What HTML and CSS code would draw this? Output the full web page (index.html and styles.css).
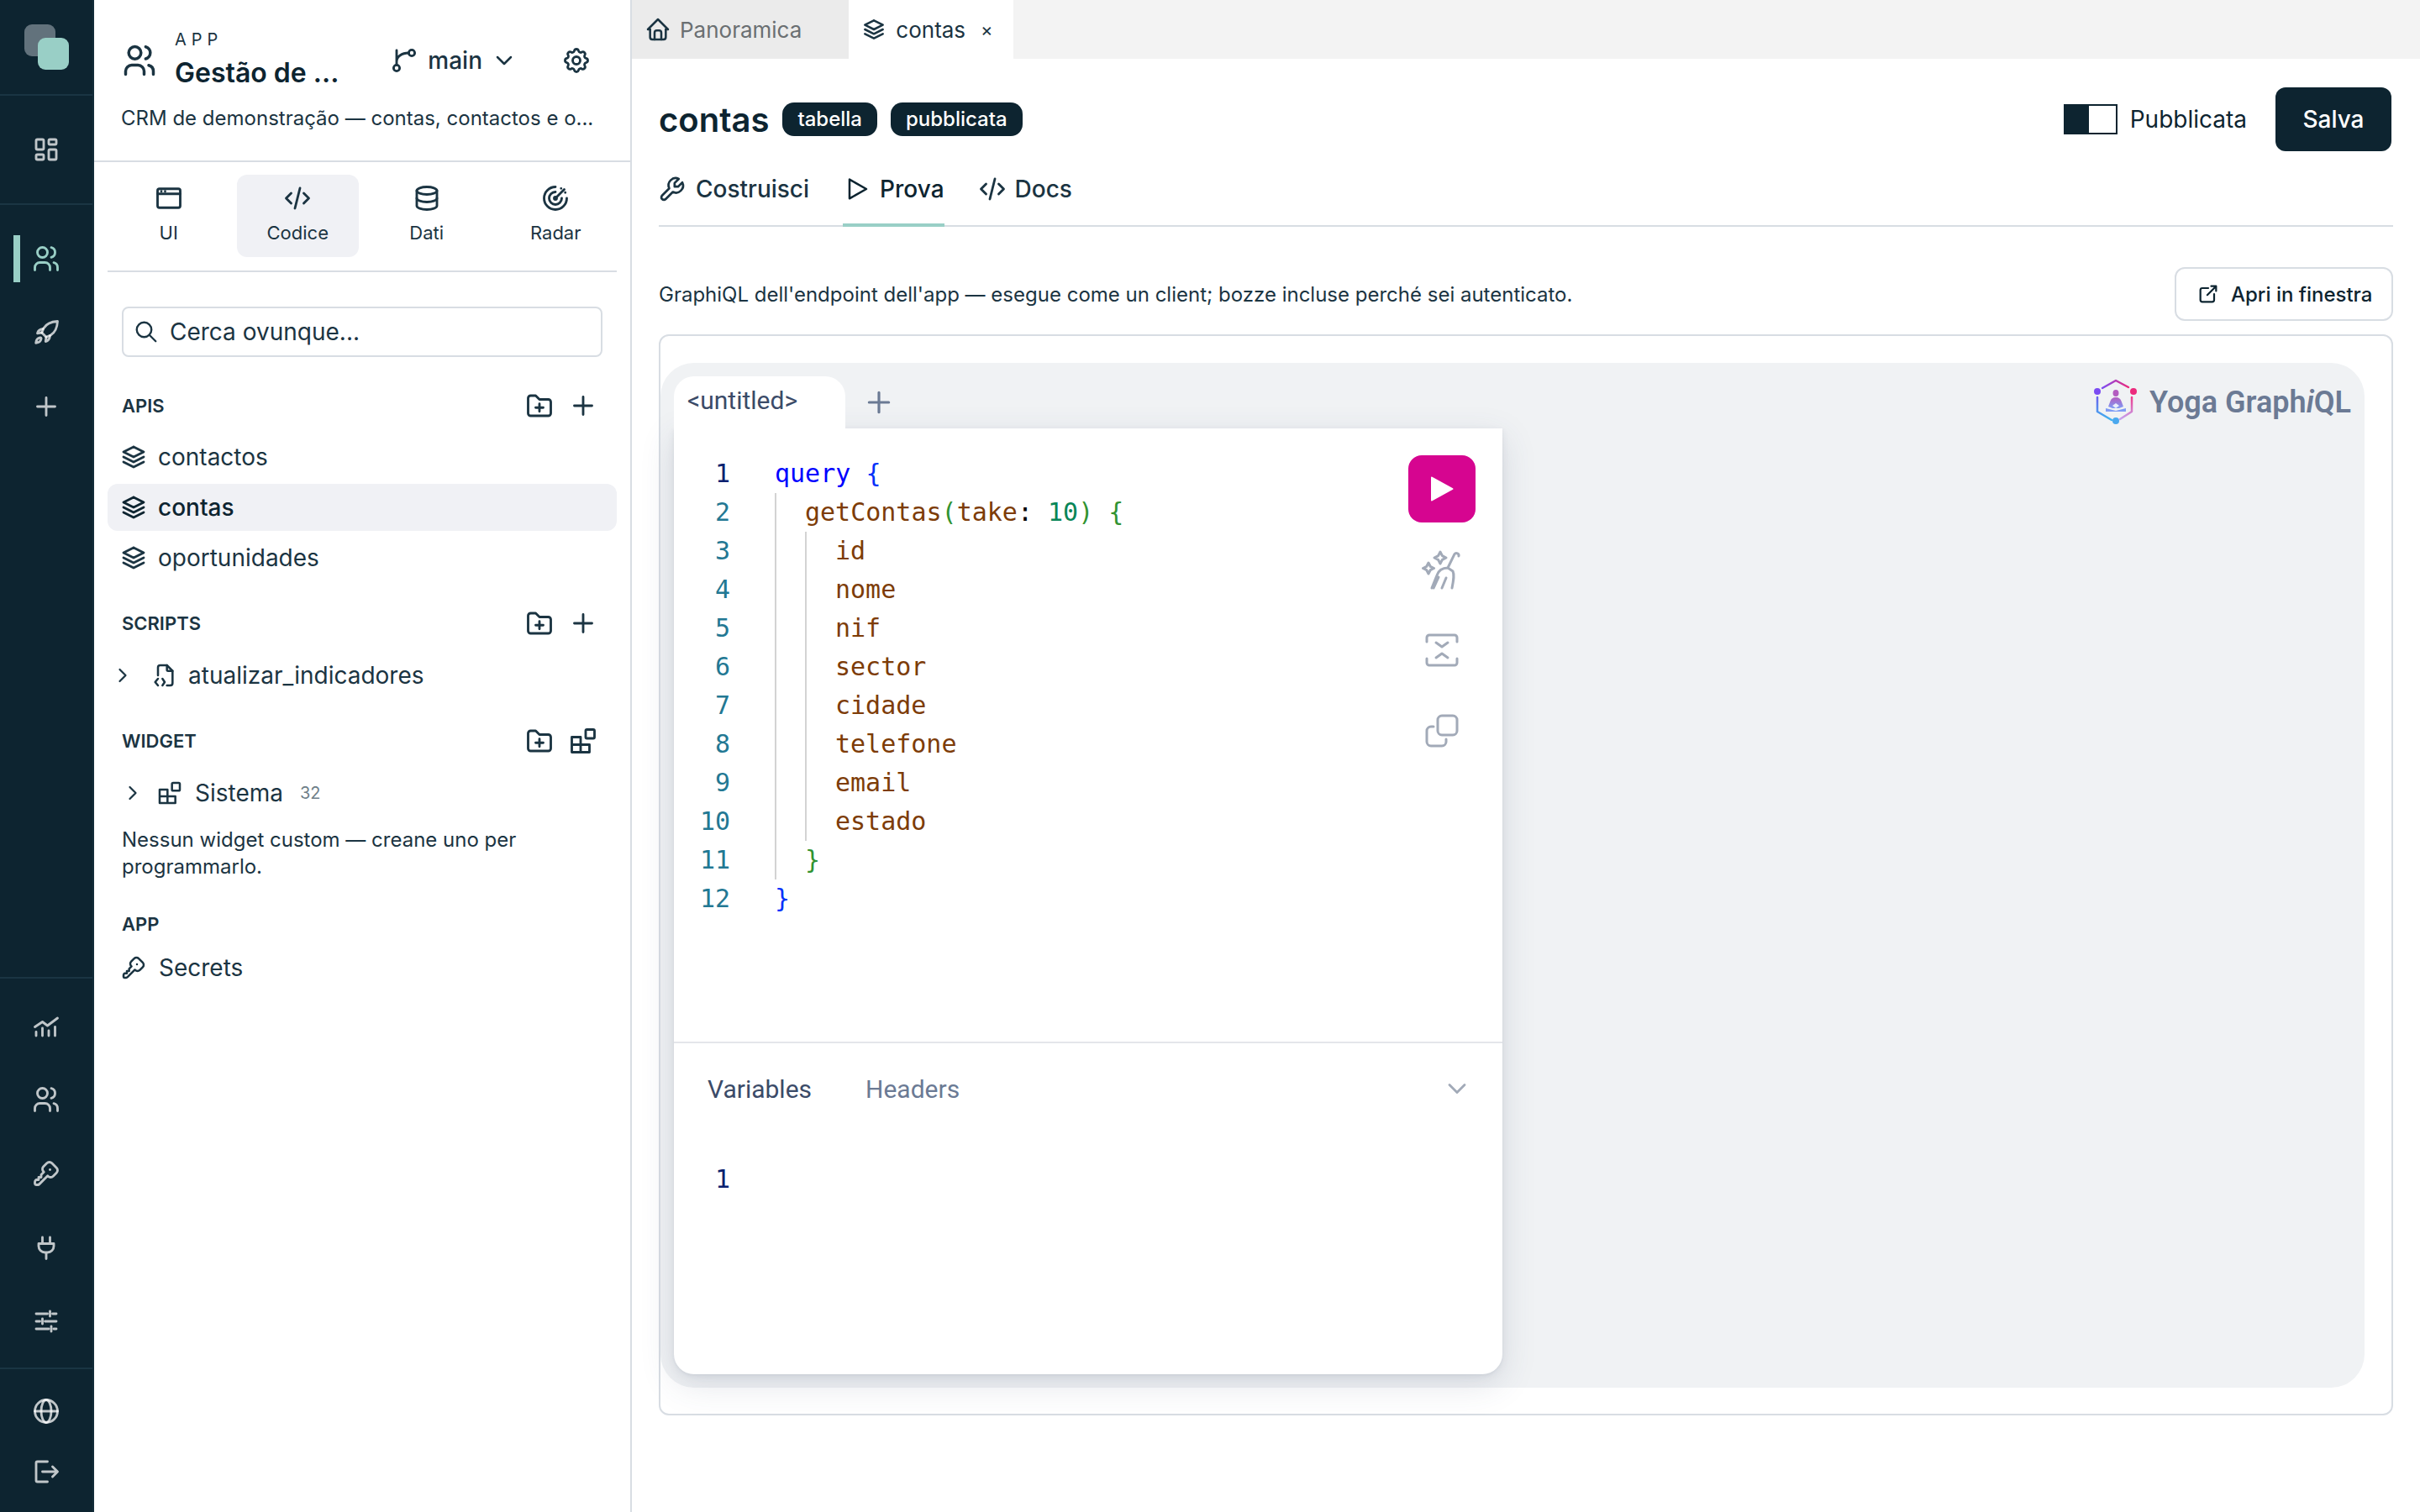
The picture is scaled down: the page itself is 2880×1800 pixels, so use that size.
FILE: index.html
```html
<!DOCTYPE html>
<html lang="it">
<head>
    <meta charset="UTF-8">
    <title>contas - Gestão de demonstração</title>
    <link rel="stylesheet" href="styles.css">
</head>
<body>
    <!-- Icon sprite -->
    <svg class="sprite" xmlns="http://www.w3.org/2000/svg">
        <symbol id="i-users" viewBox="0 0 24 24"><circle cx="9" cy="7" r="4"/><path d="M3 21v-2a4 4 0 0 1 4-4h4a4 4 0 0 1 4 4v2"/><path d="M16 3.13a4 4 0 0 1 0 7.75"/><path d="M21 21v-2a4 4 0 0 0-3-3.85"/></symbol>
        <symbol id="i-dashboard" viewBox="0 0 24 24"><rect x="4" y="4" width="6" height="8" rx="1"/><rect x="4" y="16" width="6" height="4" rx="1"/><rect x="14" y="12" width="6" height="8" rx="1"/><rect x="14" y="4" width="6" height="4" rx="1"/></symbol>
        <symbol id="i-rocket" viewBox="0 0 24 24"><path d="M21 3c-5 .3-9 2-11 5.500L8.500 12l3.500 3.500l3.500-1.500C19 12 20.700 8 21 3z"/><path d="M9.500 9C7 9.300 5.500 10.500 5 12.500l3.500-.5"/><path d="M15 14.500c-.3 2.500-1.500 4-3.500 4.500l.5-3.500"/><path d="M7 16c-1.500 .3-3 1.800-3.200 4.200C6.200 20 7.700 18.500 8 17c.2-.8-.2-1.200-1-1z"/></symbol>
        <symbol id="i-plus" viewBox="0 0 24 24"><path d="M12 5v14M5 12h14"/></symbol>
        <symbol id="i-chart" viewBox="0 0 24 24"><path d="M3 13l6-4l4 3l8-6"/><path d="M4 20v-3M9 20v-6M14 20v-4M19 20v-7"/></symbol>
        <symbol id="i-key" viewBox="0 0 24 24"><path d="M16.555 3.843l3.602 3.602a2.877 2.877 0 0 1 0 4.069l-2.643 2.643a2.877 2.877 0 0 1-4.069 0l-.301-.301l-6.558 6.558a2 2 0 0 1-1.239 .578l-.175 .008h-1.172a1 1 0 0 1-.993-.883l-.007-.117v-1.172a2 2 0 0 1 .467-1.284l.119-.13l.414-.414h2v-2h2v-2l2.144-2.144l-.301-.301a2.877 2.877 0 0 1 0-4.069l2.643-2.643a2.877 2.877 0 0 1 4.069 0"/><path d="M15 9h.01"/></symbol>
        <symbol id="i-plug" viewBox="0 0 24 24"><path d="M9 4v5M15 4v5M6 9h12v2a5 5 0 0 1-5 5h-2a5 5 0 0 1-5-5zM12 16v5"/></symbol>
        <symbol id="i-sliders" viewBox="0 0 24 24"><path d="M4 6h9M17 6h3M15 4v4M4 12h3M11 12h9M9 10v4M4 18h10M18 18h2M16 16v4"/></symbol>
        <symbol id="i-world" viewBox="0 0 24 24"><circle cx="12" cy="12" r="9"/><ellipse cx="12" cy="12" rx="4" ry="9"/><path d="M3 12h18"/></symbol>
        <symbol id="i-logout" viewBox="0 0 24 24"><path d="M13 4H5a1 1 0 0 0-1 1v14a1 1 0 0 0 1 1h8"/><path d="M9 12h12l-4-4M21 12l-4 4"/></symbol>
        <symbol id="i-branch" viewBox="0 0 24 24"><circle cx="6" cy="18" r="2.400"/><circle cx="18" cy="6" r="2.400"/><path d="M6 15.600V4M6 13c0-4 4-7 9.600-7"/></symbol>
        <symbol id="i-chevron-down" viewBox="0 0 24 24"><path d="M6 9l6 6l6-6"/></symbol>
        <symbol id="i-chevron-right" viewBox="0 0 24 24"><path d="M9 6l6 6l-6 6"/></symbol>
        <symbol id="i-gear" viewBox="0 0 24 24"><path d="M10.325 4.317c.426-1.756 2.924-1.756 3.35 0a1.724 1.724 0 0 0 2.573 1.066c1.543-.94 3.31 .826 2.37 2.37a1.724 1.724 0 0 0 1.065 2.572c1.756 .426 1.756 2.924 0 3.35a1.724 1.724 0 0 0-1.066 2.573c.94 1.543-.826 3.31-2.37 2.37a1.724 1.724 0 0 0-2.572 1.065c-.426 1.756-2.924 1.756-3.35 0a1.724 1.724 0 0 0-2.573-1.066c-1.543 .94-3.31-.826-2.37-2.37a1.724 1.724 0 0 0-1.065-2.572c-1.756-.426-1.756-2.924 0-3.35a1.724 1.724 0 0 0 1.066-2.573c-.94-1.543 .826-3.31 2.37-2.37c1 .608 2.296 .07 2.572-1.065z"/><circle cx="12" cy="12" r="3"/></symbol>
        <symbol id="i-browser" viewBox="0 0 24 24"><rect x="3" y="4.500" width="18" height="15" rx="1.500"/><path d="M3 8.500h18M6 6.500h.01M9 6.500h.01"/></symbol>
        <symbol id="i-code" viewBox="0 0 24 24"><path d="M7 8l-4 4l4 4M17 8l4 4l-4 4M14 4l-4 16"/></symbol>
        <symbol id="i-database" viewBox="0 0 24 24"><ellipse cx="12" cy="6" rx="8" ry="3"/><path d="M4 6v12a8 3 0 0 0 16 0V6"/><path d="M4 12a8 3 0 0 0 16 0"/></symbol>
        <symbol id="i-radar" viewBox="0 0 24 24"><circle cx="12" cy="12" r="1"/><path d="M12 3a9 9 0 1 0 9 9"/><path d="M12 7a5 5 0 1 0 5 5"/><path d="M12 12l7-7"/><path d="M16.500 4.200h.01M19.800 7.500h.01"/></symbol>
        <symbol id="i-search" viewBox="0 0 24 24"><circle cx="10" cy="10" r="7"/><path d="M21 21l-6-6"/></symbol>
        <symbol id="i-folder-plus" viewBox="0 0 24 24"><path d="M5 4h4l3 3h7a2 2 0 0 1 2 2v9a2 2 0 0 1-2 2H5a2 2 0 0 1-2-2V6a2 2 0 0 1 2-2z"/><path d="M12 10.500v6M9 13.500h6"/></symbol>
        <symbol id="i-stack" viewBox="0 0 24 24"><path d="M12 4l-8 4l8 4l8-4l-8-4"/><path d="M4 12l8 4l8-4"/><path d="M4 16l8 4l8-4"/></symbol>
        <symbol id="i-file-code" viewBox="0 0 24 24"><path d="M14 3v4a1 1 0 0 0 1 1h4"/><path d="M6 12V5a2 2 0 0 1 2-2h6l5 5v11a2 2 0 0 1-2 2h-3"/><path d="M6 15l-2.500 3l2.500 3M10 15l2 3l-2 3"/></symbol>
        <symbol id="i-apps" viewBox="0 0 24 24"><path d="M3 9h7v6h7v6H3zM3 15h7M10 15v6"/><rect x="14" y="3" width="7" height="7" rx="1"/></symbol>
        <symbol id="i-home" viewBox="0 0 24 24"><path d="M5 12H3l9-9l9 9h-2"/><path d="M5 12v7a2 2 0 0 0 2 2h10a2 2 0 0 0 2-2v-7"/><path d="M9 21v-6a2 2 0 0 1 2-2h2a2 2 0 0 1 2 2v6"/></symbol>
        <symbol id="i-tool" viewBox="0 0 24 24"><path transform="matrix(-1 0 0 1 24 0)" d="M7 10h3V7L6.500 3.500a6 6 0 0 1 8 8l6 6a2 2 0 0 1-3 3l-6-6a6 6 0 0 1-8-8L7 10"/></symbol>
        <symbol id="i-play" viewBox="0 0 24 24"><path d="M6 3.500v17l15-8.500z"/></symbol>
        <symbol id="i-external" viewBox="0 0 24 24"><path d="M12 6H6a2 2 0 0 0-2 2v10a2 2 0 0 0 2 2h10a2 2 0 0 0 2-2v-6"/><path d="M11 13l9-9M15 4h5v5"/></symbol>
        <symbol id="i-broom" viewBox="0 0 48 48"><path d="M22 3l2.400 4.600L29 10l-4.600 2.400L22 17l-2.400-4.600L15 10l4.600-2.400z"/><path d="M8 16l2.200 4.300l4.300 2.200l-4.300 2.200L8 29l-2.200-4.300l-4.300-2.200l4.300-2.200z"/><path d="M44 8a2.800 2.800 0 0 0-5-2.300L31 22c-6 0-11 3-13 9l-6 15M31 22l6 4c2 4 1 10-1 20M29 34l-5 12M20 33l-6 13"/></symbol>
        <symbol id="i-merge" viewBox="0 0 40 40"><path d="M2 10V5a3 3 0 0 1 3-3h30a3 3 0 0 1 3 3v5M2 30v5a3 3 0 0 0 3 3h30a3 3 0 0 0 3-3v-5"/><path d="M13 11l7 5l7-5M13 29l7-5l7 5"/></symbol>
        <symbol id="i-copy" viewBox="0 0 40 40"><rect x="15" y="2" width="23" height="23" rx="5"/><path d="M10 15H7a5 5 0 0 0-5 5v13a5 5 0 0 0 5 5h13a5 5 0 0 0 5-5v-3"/></symbol>
    </svg>

    <div class="app">
        <!-- Rail -->
        <nav class="rail">
            <div class="rail-logo">
                <div class="logo">
                    <span class="logo-back"></span>
                    <span class="logo-front"></span>
                </div>
            </div>
            <div class="rail-home">
                <svg class="icon rail-icon"><use href="#i-dashboard"/></svg>
            </div>
            <div class="rail-group">
                <a class="rail-item active"><svg class="icon rail-icon"><use href="#i-users"/></svg></a>
                <a class="rail-item"><svg class="icon rail-icon"><use href="#i-rocket"/></svg></a>
                <a class="rail-item"><svg class="icon rail-icon"><use href="#i-plus"/></svg></a>
            </div>
            <div class="rail-group rail-tools">
                <a class="rail-item"><svg class="icon rail-icon"><use href="#i-chart"/></svg></a>
                <a class="rail-item"><svg class="icon rail-icon"><use href="#i-users"/></svg></a>
                <a class="rail-item"><svg class="icon rail-icon"><use href="#i-key"/></svg></a>
                <a class="rail-item"><svg class="icon rail-icon"><use href="#i-plug"/></svg></a>
                <a class="rail-item"><svg class="icon rail-icon"><use href="#i-sliders"/></svg></a>
            </div>
            <div class="rail-group rail-foot">
                <a class="rail-item short"><svg class="icon rail-icon"><use href="#i-world"/></svg></a>
                <a class="rail-item short"><svg class="icon rail-icon"><use href="#i-logout"/></svg></a>
            </div>
        </nav>

        <!-- Explorer panel -->
        <aside class="panel">
            <header class="app-head">
                <div class="app-top">
                    <svg class="icon app-icon"><use href="#i-users"/></svg>
                    <div class="app-title">
                        <div class="app-kicker">APP</div>
                        <div class="app-name">Gestão de ...</div>
                    </div>
                    <div class="branch">
                        <svg class="icon icon-36"><use href="#i-branch"/></svg>
                        <span>main</span>
                        <svg class="icon branch-caret"><use href="#i-chevron-down"/></svg>
                    </div>
                    <svg class="icon icon-36 app-gear"><use href="#i-gear"/></svg>
                </div>
                <p class="app-desc">CRM de demonstração — contas, contactos e o...</p>
            </header>

            <div class="modes">
                <div class="mode"><svg class="icon icon-36"><use href="#i-browser"/></svg><span>UI</span></div>
                <div class="mode active"><svg class="icon icon-36"><use href="#i-code"/></svg><span>Codice</span></div>
                <div class="mode"><svg class="icon icon-36"><use href="#i-database"/></svg><span>Dati</span></div>
                <div class="mode"><svg class="icon icon-36"><use href="#i-radar"/></svg><span>Radar</span></div>
            </div>

            <div class="search">
                <svg class="icon search-icon"><use href="#i-search"/></svg>
                <span>Cerca ovunque...</span>
            </div>

            <section class="section section-apis">
                <div class="section-head">
                    <span class="section-title">APIS</span>
                    <div class="section-actions">
                        <svg class="icon icon-36"><use href="#i-folder-plus"/></svg>
                        <svg class="icon icon-36"><use href="#i-plus"/></svg>
                    </div>
                </div>
                <div class="rows">
                    <div class="row"><svg class="icon icon-36"><use href="#i-stack"/></svg>contactos</div>
                    <div class="row active"><svg class="icon icon-36"><use href="#i-stack"/></svg>contas</div>
                    <div class="row"><svg class="icon icon-36"><use href="#i-stack"/></svg>oportunidades</div>
                </div>
            </section>

            <section class="section">
                <div class="section-head">
                    <span class="section-title">SCRIPTS</span>
                    <div class="section-actions">
                        <svg class="icon icon-36"><use href="#i-folder-plus"/></svg>
                        <svg class="icon icon-36"><use href="#i-plus"/></svg>
                    </div>
                </div>
                <div class="rows">
                    <div class="row tree-script">
                        <svg class="icon tree-caret"><use href="#i-chevron-right"/></svg>
                        <svg class="icon icon-32"><use href="#i-file-code"/></svg>
                        atualizar_indicadores
                    </div>
                </div>
            </section>

            <section class="section">
                <div class="section-head">
                    <span class="section-title">WIDGET</span>
                    <div class="section-actions">
                        <svg class="icon icon-36"><use href="#i-folder-plus"/></svg>
                        <svg class="icon icon-36"><use href="#i-apps"/></svg>
                    </div>
                </div>
                <div class="rows">
                    <div class="row tree-widget">
                        <svg class="icon tree-caret"><use href="#i-chevron-right"/></svg>
                        <svg class="icon icon-32"><use href="#i-apps"/></svg>
                        Sistema
                        <span class="row-count">32</span>
                    </div>
                </div>
                <p class="section-note">Nessun widget custom — creane uno per programmarlo.</p>
            </section>

            <section class="section section-app">
                <div class="section-head">
                    <span class="section-title">APP</span>
                </div>
                <div class="rows">
                    <div class="row"><svg class="icon icon-32 key-icon"><use href="#i-key"/></svg>Secrets</div>
                </div>
            </section>
        </aside>

        <!-- Main area -->
        <main class="main">
            <div class="tabbar">
                <div class="tab"><svg class="icon icon-32"><use href="#i-home"/></svg>Panoramica</div>
                <div class="tab active">
                    <svg class="icon icon-32"><use href="#i-stack"/></svg>contas
                    <span class="tab-close">×</span>
                </div>
            </div>

            <div class="content">
                <div class="page-head">
                    <h1 class="page-title">contas</h1>
                    <span class="badge">tabella</span>
                    <span class="badge">pubblicata</span>
                    <div class="page-actions">
                        <div class="toggle"><span class="toggle-fill"></span></div>
                        <span class="toggle-label">Pubblicata</span>
                        <button class="btn-save">Salva</button>
                    </div>
                </div>

                <div class="subtabs">
                    <div class="subtab"><svg class="icon subtab-tool"><use href="#i-tool"/></svg>Costruisci</div>
                    <div class="subtab active"><svg class="icon icon-32"><use href="#i-play"/></svg>Prova</div>
                    <div class="subtab"><svg class="icon subtab-code"><use href="#i-code"/></svg>Docs</div>
                </div>

                <div class="intro">
                    <p>GraphiQL dell'endpoint dell'app — esegue come un client; bozze incluse perché sei autenticato.</p>
                    <button class="btn-open"><svg class="icon external-icon"><use href="#i-external"/></svg>Apri in finestra</button>
                </div>

                <!-- GraphiQL frame -->
                <div class="frame">
                    <div class="gql">
                        <div class="gql-top">
                            <div class="gql-tab">&lt;untitled&gt;</div>
                            <svg class="icon gql-add"><use href="#i-plus"/></svg>
                            <div class="yoga">
                                <svg class="yoga-logo" viewBox="0 0 52 56">
                                    <defs>
                                        <linearGradient id="yoga-top" x1="0" y1="0" x2="1" y2="0"><stop offset="0" stop-color="#7b4cf2"/><stop offset="1" stop-color="#ec2a7c"/></linearGradient>
                                        <linearGradient id="yoga-left" x1="0" y1="0" x2="0" y2="1"><stop offset="0" stop-color="#6a63ee"/><stop offset="1" stop-color="#3fb2ee"/></linearGradient>
                                        <linearGradient id="yoga-right" x1="0" y1="0" x2="0" y2="1"><stop offset="0" stop-color="#ee3d8e"/><stop offset="1" stop-color="#c5a2ee"/></linearGradient>
                                        <linearGradient id="yoga-body" x1="0" y1="0" x2="0" y2="1"><stop offset="0" stop-color="#b45cc0"/><stop offset="1" stop-color="#7f9cf5"/></linearGradient>
                                    </defs>
                                    <path class="yoga-line" stroke="url(#yoga-top)" d="M10 11L26 2L41 10"/>
                                    <path class="yoga-line" stroke="url(#yoga-left)" d="M4 22V39L21 49"/>
                                    <path class="yoga-line" stroke="url(#yoga-right)" d="M45 22V39L31 48"/>
                                    <circle cx="4" cy="15" r="4" fill="#7b4cf2"/>
                                    <circle cx="47" cy="15" r="4" fill="#ec2a7c"/>
                                    <circle cx="26" cy="50" r="4" fill="#4aa8ee"/>
                                    <ellipse cx="26" cy="17" rx="3.500" ry="4" fill="#b45cc0"/>
                                    <path fill="url(#yoga-body)" d="M26 22c-3.500 0-5.500 1.500-6.500 4.500L17 33l5 2h8l5-2l-2.500-6.500C31.500 23.500 29.500 22 26 22z"/>
                                    <path fill="#7f9cf5" d="M14 35l12 3l12-3v4H14z"/>
                                    <path fill="#eaeefc" d="M26 29l4 3l-4 3l-4-3z"/>
                                </svg>
                                <span class="yoga-name">Yoga Graph<i>i</i>QL</span>
                            </div>
                        </div>

                        <div class="gql-card">
                            <div class="editor">
                                <div class="code">
                                    <div class="line current"><span class="num">1</span><span class="src"><span class="kw">query</span> <span class="br-1">{</span></span></div>
                                    <div class="line"><span class="num">2</span><span class="guide"></span><span class="src"><span class="fld">getContas</span><span class="br-2">(</span><span class="fld">take</span><span class="colon">:</span> <span class="int">10</span><span class="br-2">)</span> <span class="br-2">{</span></span></div>
                                    <div class="line"><span class="num">3</span><span class="guide"></span><span class="guide"></span><span class="fld">id</span></div>
                                    <div class="line"><span class="num">4</span><span class="guide"></span><span class="guide"></span><span class="fld">nome</span></div>
                                    <div class="line"><span class="num">5</span><span class="guide"></span><span class="guide"></span><span class="fld">nif</span></div>
                                    <div class="line"><span class="num">6</span><span class="guide"></span><span class="guide"></span><span class="fld">sector</span></div>
                                    <div class="line"><span class="num">7</span><span class="guide"></span><span class="guide"></span><span class="fld">cidade</span></div>
                                    <div class="line"><span class="num">8</span><span class="guide"></span><span class="guide"></span><span class="fld">telefone</span></div>
                                    <div class="line"><span class="num">9</span><span class="guide"></span><span class="guide"></span><span class="fld">email</span></div>
                                    <div class="line"><span class="num">10</span><span class="guide"></span><span class="guide"></span><span class="fld">estado</span></div>
                                    <div class="line"><span class="num">11</span><span class="guide"></span><span class="br-2">}</span></div>
                                    <div class="line"><span class="num">12</span><span class="br-1">}</span></div>
                                </div>
                                <div class="toolbar">
                                    <button class="tool-run"><svg viewBox="0 0 28 30"><path d="M1 1.500v27a1 1 0 0 0 1.500 .8L27 15.800a1 1 0 0 0 0-1.600L2.500 .700A1 1 0 0 0 1 1.500z"/></svg></button>
                                    <div class="tool"><svg class="icon tool-icon"><use href="#i-broom"/></svg></div>
                                    <div class="tool"><svg class="icon tool-icon"><use href="#i-merge"/></svg></div>
                                    <div class="tool"><svg class="icon tool-icon"><use href="#i-copy"/></svg></div>
                                </div>
                            </div>
                            <div class="vars">
                                <div class="vars-head">
                                    <span class="vars-tab active">Variables</span>
                                    <span class="vars-tab">Headers</span>
                                    <svg class="icon vars-caret"><use href="#i-chevron-down"/></svg>
                                </div>
                                <div class="code">
                                    <div class="line current"><span class="num">1</span></div>
                                </div>
                            </div>
                        </div>
                    </div>
                </div>
            </div>
        </main>
    </div>
</body>
</html>
```

FILE: styles.css
```css
* {
    margin: 0;
    padding: 0;
    box-sizing: border-box;
}

body {
    font-family: Inter, "Noto Sans", sans-serif;
    color: #1b3442;
    background: white;
    width: 2880px;
    height: 1800px;
    overflow: hidden;
}

.sprite {
    display: none;
}

.app {
    display: flex;
    height: 1800px;
}

/* Icons */
.icon {
    fill: none;
    stroke: currentColor;
    stroke-width: 1.9;
    stroke-linecap: round;
    stroke-linejoin: round;
    flex: none;
}

.icon-36 {
    width: 36px;
    height: 36px;
}

.icon-32 {
    width: 32px;
    height: 32px;
}

/* Rail */
.rail {
    width: 112px;
    flex: none;
    display: flex;
    flex-direction: column;
    background: #0d2430;
    color: rgba(255, 255, 255, 0.74);
    border-right: 2px solid #132c39;
}

.rail-logo {
    height: 114px;
    padding: 29px 0 0 29px;
    border-bottom: 2px solid #1a3543;
}

.logo {
    position: relative;
    width: 53px;
    height: 54px;
}

.logo-back,
.logo-front {
    position: absolute;
    width: 37px;
    height: 38px;
    border-radius: 9px;
}

.logo-back {
    top: 0;
    left: 0;
    background: #62727c;
}

.logo-front {
    top: 16px;
    left: 16px;
    background: #99cfc6;
}

.rail-home {
    height: 130px;
    display: flex;
    align-items: center;
    justify-content: center;
    border-bottom: 2px solid #1a3543;
}

.rail-icon {
    width: 36px;
    height: 36px;
}

.rail-group {
    padding-top: 20px;
}

.rail-tools {
    margin-top: auto;
    padding: 12px 0 11px;
    border-top: 2px solid #1a3543;
}

.rail-foot {
    padding: 14px 0 12px;
    border-top: 2px solid #1a3543;
}

.rail-item {
    position: relative;
    height: 88px;
    display: flex;
    align-items: center;
    justify-content: center;
}

.rail-item.short {
    height: 72px;
}

.rail-item.active {
    color: #99cfc6;
}

.rail-item.active::before {
    content: "";
    position: absolute;
    top: 16px;
    left: 16px;
    width: 8px;
    height: 56px;
    background: #99cfc6;
}

/* Explorer panel */
.panel {
    width: 640px;
    flex: none;
    border-right: 2px solid #d8dde3;
    padding: 0 16px;
}

.app-head {
    margin: 0 -16px;
    height: 193px;
    border-bottom: 2px solid #d8dde3;
}

.app-top {
    display: flex;
    align-items: center;
    padding: 35px 46px 0 32px;
}

.app-icon {
    width: 44px;
    height: 44px;
    margin-right: 20px;
}

.app-title {
    flex: 1;
}

.app-kicker {
    font-size: 20px;
    line-height: 24px;
    letter-spacing: 6px;
}

.app-name {
    margin-top: 6px;
    font-size: 32px;
    line-height: 44px;
    font-weight: 600;
    color: #0d2430;
}

.branch {
    display: flex;
    align-items: center;
    gap: 10px;
    font-size: 28px;
    font-weight: 500;
}

.branch-caret {
    width: 32px;
    height: 32px;
}

.app-gear {
    margin-left: 52px;
}

.app-desc {
    margin: 16px 0 0 32px;
    font-size: 24px;
    line-height: 32px;
}

.modes {
    display: flex;
    gap: 8px;
    padding: 15px 0 16px;
    border-bottom: 2px solid #d8dde3;
}

.mode {
    flex: 1;
    height: 98px;
    padding-top: 10px;
    display: flex;
    flex-direction: column;
    align-items: center;
    gap: 8px;
    border-radius: 12px;
    font-size: 22px;
    line-height: 30px;
}

.mode.active {
    background: #f0f1f5;
}

.search {
    display: flex;
    align-items: center;
    gap: 13px;
    height: 60px;
    margin: 41px 17px 0;
    padding-left: 12px;
    border: 2px solid #d8dde3;
    border-radius: 8px;
    font-size: 28px;
}

.search-icon {
    width: 30px;
    height: 30px;
}

.section {
    margin-top: 28px;
}

.section-apis {
    margin-top: 36px;
}

.section-app {
    margin-top: 30px;
}

.section-head {
    display: flex;
    align-items: center;
    justify-content: space-between;
    height: 44px;
    padding: 0 22px 0 17px;
}

.section-title {
    font-size: 22px;
    font-weight: 600;
}

.section-actions {
    display: flex;
    gap: 16px;
}

.rows {
    margin-top: 12px;
    display: flex;
    flex-direction: column;
    gap: 4px;
}

.section-apis .rows {
    margin-top: 11px;
}

.section-app .rows {
    margin-top: 2px;
}

.row {
    display: flex;
    align-items: center;
    gap: 11px;
    height: 56px;
    padding-left: 13px;
    border-radius: 12px;
    font-size: 28px;
}

.row.active {
    background: #f0f1f5;
    font-weight: 500;
    color: #0d2430;
}

.key-icon {
    margin: 0 3px 0 2px;
}

.tree-caret {
    width: 28px;
    height: 28px;
}

.tree-script,
.tree-widget {
    gap: 0;
    padding-left: 11px;
}

.tree-script .tree-caret {
    margin: 0 20px 0 -7px;
}

.tree-script .icon-32 {
    margin-right: 12px;
}

.tree-widget .tree-caret {
    margin: 0 14px 0 5px;
}

.tree-widget .icon-32 {
    margin-right: 14px;
}

.row-count {
    margin-left: 20px;
    font-size: 20px;
    color: #6f7f89;
}

.section-note {
    margin: 12px 17px 0;
    font-size: 24px;
    line-height: 32px;
}

/* Main area */
.main {
    flex: 1;
    min-width: 0;
    display: flex;
    flex-direction: column;
}

.tabbar {
    display: flex;
    height: 70px;
    background: #f3f3f3;
}

.tab {
    display: flex;
    align-items: center;
    gap: 10px;
    padding: 0 56px 0 15px;
    background: #ebebeb;
    font-size: 26px;
    color: #6a6f72;
}

.tab .icon {
    color: #1b3442;
}

.tab.active {
    padding: 0 24px 0 14px;
    background: white;
    color: #1b3442;
}

.tab-close {
    margin-left: 8px;
    font-size: 22px;
}

.content {
    padding: 0 32px;
}

.page-head {
    display: flex;
    align-items: center;
    gap: 16px;
    height: 76px;
    margin-top: 34px;
}

.page-title {
    font-size: 40px;
    font-weight: 600;
    color: #0d2430;
}

.badge {
    height: 40px;
    padding: 0 18px;
    border-radius: 14px;
    background: #0d2430;
    color: white;
    font-size: 24px;
    font-weight: 500;
    line-height: 40px;
}

.page-actions {
    margin: 0 2px 0 auto;
    display: flex;
    align-items: center;
}

.toggle {
    width: 64px;
    height: 36px;
    border: 2px solid #0d2430;
}

.toggle-fill {
    display: block;
    width: 28px;
    height: 100%;
    background: #0d2430;
}

.toggle-label {
    margin: 0 34px 0 15px;
    font-size: 28px;
    color: #0d2430;
}

.btn-save {
    width: 138px;
    height: 76px;
    border: none;
    border-radius: 12px;
    background: #0d2430;
    color: white;
    font-family: inherit;
    font-size: 28px;
    font-weight: 500;
}

.subtabs {
    display: flex;
    gap: 40px;
    height: 90px;
    border-bottom: 2px solid #d8dde3;
}

.subtab {
    display: flex;
    align-items: center;
    gap: 12px;
    height: 90px;
    padding-top: 4px;
    border-bottom: 4px solid transparent;
    font-size: 28px;
    font-weight: 500;
}

.subtab.active {
    border-bottom-color: #99cfc6;
    color: #0d2430;
}

.subtab-tool {
    width: 34px;
    height: 34px;
    margin: 0 -1px;
}

.subtab-code {
    width: 36px;
    height: 36px;
    margin: 0 -3px 0 -1px;
}

.intro {
    display: flex;
    align-items: center;
    justify-content: space-between;
    height: 64px;
    margin-top: 48px;
    font-size: 24px;
}

.btn-open {
    display: flex;
    align-items: center;
    gap: 13px;
    width: 260px;
    height: 64px;
    padding-left: 24px;
    border: 2px solid #d8dde3;
    border-radius: 12px;
    background: white;
    color: #0d2430;
    font-family: inherit;
    font-size: 24px;
    font-weight: 500;
}

.external-icon {
    width: 28px;
    height: 28px;
}

/* GraphiQL frame */
.frame {
    height: 1287px;
    margin-top: 16px;
    padding: 32px 32px 31px 0;
    border: 2px solid #d8dde3;
    border-radius: 12px;
}

.gql {
    height: 100%;
    padding: 16px 0 0 16px;
    background: #f0f2f4;
    border-radius: 40px;
    font-family: Roboto, sans-serif;
    color: #3b4b68;
}

.gql-top {
    display: flex;
    align-items: center;
    height: 62px;
    padding-right: 16px;
}

.gql-tab {
    position: relative;
    z-index: 1;
    width: 204px;
    height: 62px;
    padding: 10px 0 0 16px;
    background: white;
    border-radius: 24px 24px 0 0;
    font-size: 30px;
    line-height: 38px;
}

.gql-add {
    width: 40px;
    height: 40px;
    margin-left: 20px;
    color: #6b7a94;
}

.yoga {
    margin-left: auto;
    display: flex;
    align-items: center;
    gap: 14px;
}

.yoga-logo {
    width: 52px;
    height: 56px;
}

.yoga-line {
    fill: none;
    stroke-width: 2.5;
    stroke-linecap: round;
    stroke-linejoin: round;
}

.yoga-name {
    font-size: 36px;
    font-weight: 600;
    color: #6b7a94;
}

.gql-card {
    position: relative;
    width: 986px;
    height: 1126px;
    background: white;
    border-radius: 0 0 24px 24px;
    box-shadow: 0 12px 40px rgba(59, 76, 106, 0.15), 0 3px 9px rgba(59, 76, 106, 0.08), 0 1px 3px rgba(59, 76, 106, 0.05);
}

.editor {
    display: flex;
    justify-content: space-between;
    height: 732px;
    border-bottom: 2px solid #e4e6ea;
}

.code {
    padding-top: 31px;
    font-family: "DejaVu Sans Mono", "Liberation Mono", monospace;
    font-size: 30px;
}

.line {
    display: flex;
    height: 46px;
    line-height: 46px;
    white-space: pre;
}

.num {
    width: 67px;
    margin-right: 53px;
    text-align: right;
    color: #237893;
}

.line.current .num {
    color: #0b216f;
}

.guide {
    width: 36px;
    border-left: 2px solid #d3d3d3;
}

.kw { color: #0000ff; }
.br-1 { color: #0431fa; }
.br-2 { color: #319331; }
.fld { color: #7d3c08; }
.colon { color: #000; }
.int { color: #098658; }

.toolbar {
    display: flex;
    flex-direction: column;
    gap: 16px;
    padding: 32px 32px 0 0;
}

.tool-run {
    width: 80px;
    height: 80px;
    display: flex;
    align-items: center;
    justify-content: center;
    border: none;
    border-radius: 16px;
    background: #d60590;
}

.tool-run svg {
    width: 28px;
    height: 30px;
    fill: white;
}

.tool {
    width: 80px;
    height: 80px;
    display: flex;
    align-items: center;
    justify-content: center;
    color: #a2aab8;
}

.tool-icon {
    width: 40px;
    height: 40px;
    stroke-width: 3;
}

.tool:nth-child(2) .tool-icon {
    width: 48px;
    height: 48px;
}

.vars-head {
    display: flex;
    align-items: center;
    gap: 64px;
    height: 108px;
    padding: 0 36px 0 40px;
    font-size: 30px;
    color: #6b7a94;
}

.vars-tab.active {
    color: #3b4b68;
}

.vars-caret {
    width: 36px;
    height: 36px;
    margin-left: auto;
    color: #a2aab8;
}
```
